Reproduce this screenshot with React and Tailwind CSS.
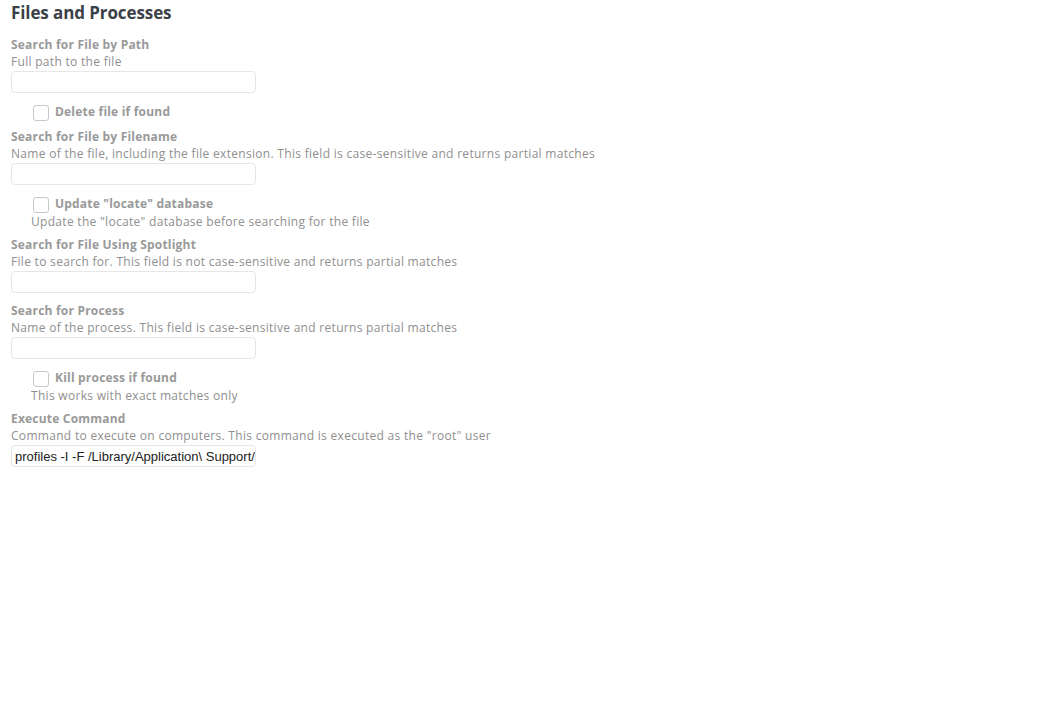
import React from "react";

const font = { fontFamily: "'Open Sans', Lato, sans-serif" };

function Label({ children }) {
  return <div className="text-[12px] font-bold leading-[17px] tracking-[0.2px] text-[#999999]">{children}</div>;
}
function Desc({ children, className = "" }) {
  return <div className={"text-[12px] leading-[17px] tracking-[0.3px] text-[#8f8f8f] " + className}>{children}</div>;
}
function Input({ value }) {
  return (
    <input
      readOnly
      value={value || ""}
      className="mt-[1px] block h-[22px] w-[245px] rounded-[4px] border border-[#e6e6e6] bg-white pl-[3px] pr-0 text-[13px] text-[#222] outline-none"
      style={{ fontFamily: "'Liberation Sans', Arial, sans-serif" }}
    />
  );
}
function Check({ children }) {
  return (
    <div className="flex h-[17px] items-center gap-[6px] pl-[22px]">
      <span className="block h-[16px] w-[16px] rounded-[3px] border border-[#c8c8c8] bg-white" />
      <span className="-mt-[3px] text-[12px] font-bold leading-[17px] tracking-[0.2px] text-[#999999]">{children}</span>
    </div>
  );
}

export default function App() {
  return (
    <div className="min-h-[714px] w-[1044px] bg-white pl-[11px] pt-[3px]" style={font}>
      <h1 className="text-[17px] font-bold leading-[20px] tracking-[-0.1px] text-[#3b4147]">Files and Processes</h1>

      <div className="mt-[13px]">
        <Label>Search for File by Path</Label>
        <Desc>Full path to the file</Desc>
        <Input />
      </div>
      <div className="mt-[11px]">
        <Check>Delete file if found</Check>
      </div>

      <div className="mt-[7px]">
        <Label>Search for File by Filename</Label>
        <Desc>Name of the file, including the file extension. This field is case-sensitive and returns partial matches</Desc>
        <Input />
      </div>
      <div className="mt-[11px]">
        <Check>Update "locate" database</Check>
        <Desc className="pl-[20px]">Update the "locate" database before searching for the file</Desc>
      </div>

      <div className="mt-[6px]">
        <Label>Search for File Using Spotlight</Label>
        <Desc>File to search for. This field is not case-sensitive and returns partial matches</Desc>
        <Input />
      </div>

      <div className="mt-[9px]">
        <Label>Search for Process</Label>
        <Desc>Name of the process. This field is case-sensitive and returns partial matches</Desc>
        <Input />
      </div>
      <div className="mt-[11px]">
        <Check>Kill process if found</Check>
        <Desc className="pl-[20px]">This works with exact matches only</Desc>
      </div>

      <div className="mt-[6px]">
        <Label>Execute Command</Label>
        <Desc>Command to execute on computers. This command is executed as the "root" user</Desc>
        <Input value={"profiles -I -F /Library/Application\\ Support/"} />
      </div>
    </div>
  );
}
